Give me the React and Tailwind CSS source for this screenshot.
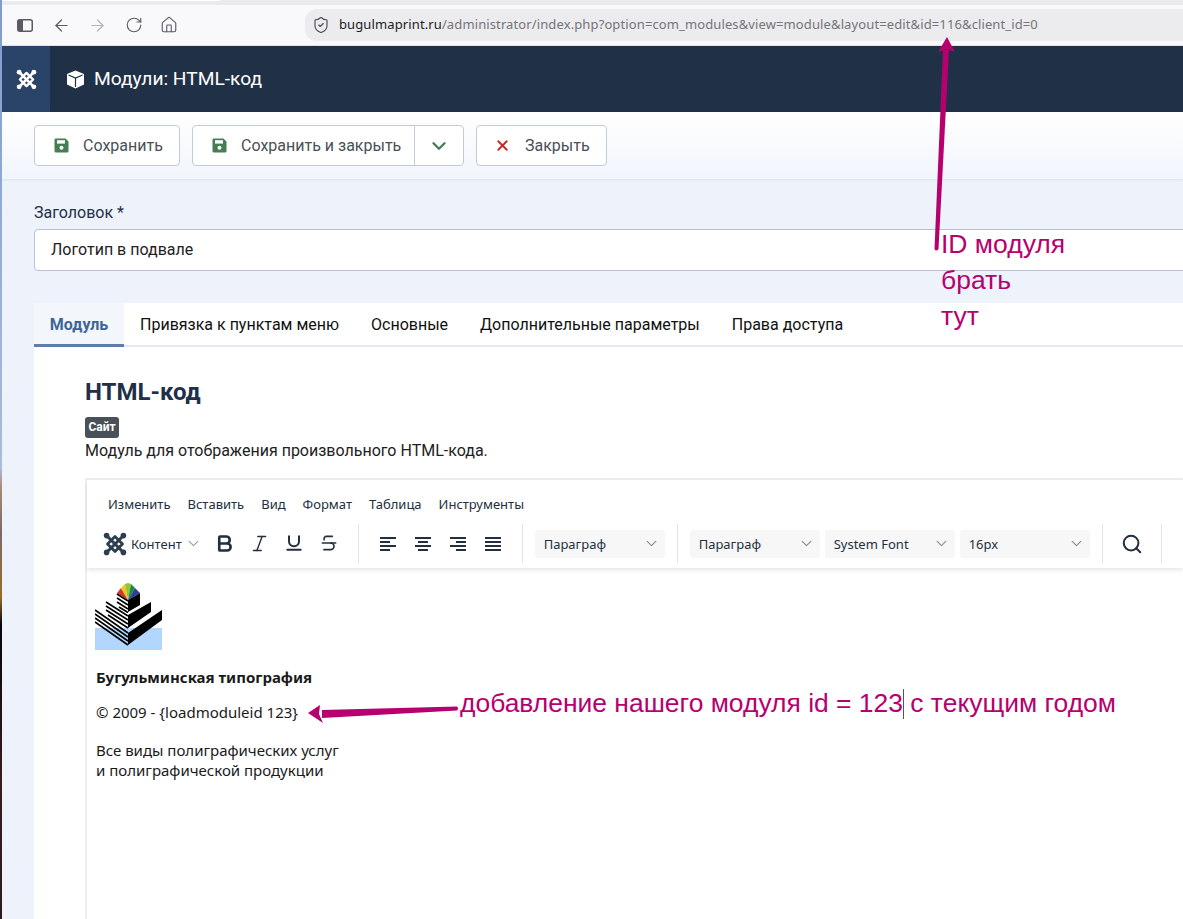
import React from "react";
import { ArrowLeft, ArrowRight, RotateCw, Home, ShieldCheck, ChevronDown, Search, X, Bold, Italic, Underline, Strikethrough } from "lucide-react";

function JoomlaLogo({ size = 24, color = "#fff" }) {
  return (
    <svg width={size} height={size} viewBox="0 0 24 24" fill="none" stroke={color} strokeLinecap="round" strokeLinejoin="round">
      <path d="M4.5 4.5 L19.5 19.5 M19.5 4.5 L4.5 19.5" strokeWidth="3" />
      <path d="M4.5 12 L12 4.5 L19.5 12 L12 19.5 Z" strokeWidth="2.8" />
      <circle cx="3.6" cy="3.6" r="2.8" fill={color} stroke="none" />
      <circle cx="20.4" cy="3.6" r="2.8" fill={color} stroke="none" />
      <circle cx="3.6" cy="20.4" r="2.8" fill={color} stroke="none" />
      <circle cx="20.4" cy="20.4" r="2.8" fill={color} stroke="none" />
    </svg>
  );
}

function SaveIcon() {
  return (
    <svg width="15" height="15" viewBox="0 0 15 15">
      <path d="M1.5 0.5 H11.5 L14.5 3.5 V13 a1.5 1.5 0 0 1 -1.5 1.5 H2 a1.5 1.5 0 0 1 -1.5 -1.5 V2 a1.5 1.5 0 0 1 1 -1.5 Z" fill="#457d54" />
      <rect x="3" y="2.2" width="8" height="3.4" fill="#fff" />
      <circle cx="7.5" cy="9.8" r="2" fill="#fff" />
    </svg>
  );
}

function AlignIcon({ kind }) {
  const rows = kind === "justify" ? [[0, 16], [0, 16], [0, 16], [0, 16]]
    : kind === "left" ? [[0, 16], [0, 10], [0, 16], [0, 10]]
    : kind === "center" ? [[0, 16], [3, 10], [0, 16], [3, 10]]
    : [[0, 16], [6, 10], [0, 16], [6, 10]];
  return (
    <svg width="16" height="14" viewBox="0 0 16 14" fill="#222f3e">
      {rows.map(([x, w], i) => <rect key={i} x={x} y={i * 4} width={w} height="2" />)}
    </svg>
  );
}

function SiteLogo() {
  return (
    <svg width="67" height="67" viewBox="0 0 67 67" className="block -ml-px">
      <rect x="0" y="45" width="67" height="22" fill="#b3d6ff" />
      <path d="M22 10 L26 5 L33 17 Z" fill="#d8352a" />
      <path d="M26 5 L30 1 L33 17 Z" fill="#f0c419" />
      <path d="M30 1 L33 0 L36 1 L33 17 Z" fill="#8cc63f" />
      <path d="M36 1 L40 5 L33 17 Z" fill="#1f8a3c" />
      <path d="M40 5 L45 10 L33 17 Z" fill="#2b3f9e" />
      <path d="M33 17 L45 10 V22 L33 29 Z" fill="#000" />
      <path d="M33 32 L56 19 V29 L33 45 Z" fill="#000" />
      <path d="M33 50 L67 27 V37 L33 62 Z" fill="#000" />
      <g stroke="#000" strokeWidth="1.6" fill="none">
        <path d="M22 11 L33 18 M22 15 L33 22 M22 19 L33 26 M24 24 L33 29.5" />
        <path d="M11 19 L33 33 M11 23 L33 37 M11 27 L33 41 M13 32 L33 45" />
        <path d="M0 27 L33 50 M0 31 L33 54 M0 35 L33 58 M0 39 L33 62" />
      </g>
    </svg>
  );
}

const Tool = ({ children }) => <span className="w-[35px] flex justify-center text-[#222f3e]">{children}</span>;
const Sep = ({ ml = "" }) => <span className={`h-[39px] w-px bg-[#dfe3e8] ${ml}`} />;
const Sel = ({ children }) => (
  <span className="w-[130px] h-7 rounded-[3px] bg-[#f7f7f8] flex items-center justify-between pl-[9px] pr-[5px] text-[13px] text-[#222f3e]">
    <span className="pt-[2px]">{children}</span>
    <ChevronDown size={17} className="text-[#8a939c]" strokeWidth={1.8} />
  </span>
);

export default function App() {
  return (
    <div className="relative w-[1183px] h-[919px] overflow-hidden bg-[#edf2fb] font-['Roboto',sans-serif]">
      <div className="absolute left-0 top-0 bottom-0 w-[2px] bg-[linear-gradient(to_bottom,#7f9ccf_0%,#a9bcdc_51%,#a98a78_53%,#7d6a66_58%,#9a6a2a_65%,#05060c_68%,#3a1c1c_85%,#2a1c22_100%)]" />

      <div className="ml-[2px] h-[5px] bg-[#ebeaee]"><div className="w-[218px] h-px bg-white" /></div>
      <div className="ml-[2px] h-[41px] bg-[#f9f9fb] flex items-center border-b border-[#e2e2e5]">
        <span className="ml-[15px] w-[18px] flex items-center">
          <svg width="16" height="13" viewBox="0 0 16 13" fill="none"><rect x="0.75" y="0.75" width="14.5" height="11.5" rx="2" stroke="#5b5b66" strokeWidth="1.5" /><rect x="1" y="1" width="5" height="11" fill="#5b5b66" /></svg>
        </span>
        <ArrowLeft size={19} strokeWidth={1.5} className="ml-[17px] text-[#5b5b66]" />
        <ArrowRight size={19} strokeWidth={1.5} className="ml-[17px] text-[#b3b3ba]" />
        <RotateCw size={18} strokeWidth={1.5} className="ml-[18px] text-[#5b5b66]" />
        <Home size={18} strokeWidth={1.5} className="ml-[17px] text-[#5b5b66]" />
        <div className="ml-[127px] flex-1 h-8 -mr-px rounded-l-xl bg-[#ecebee] flex items-center">
          <ShieldCheck size={18} strokeWidth={1.5} className="ml-[7px] text-[#4a4a52]" />
          <span className="ml-[9px] text-[13px] tracking-[0.115px] font-['Noto_Sans',sans-serif] text-[#1c1b22]">
            bugulmaprint.ru<span className="text-[#74747c]">/administrator/index.php?option=com_modules&amp;view=module&amp;layout=edit&amp;id=116&amp;client_id=0</span>
          </span>
        </div>
      </div>

      <header className="ml-[2px] h-[66px] bg-[#1f3047] flex items-center text-white">
        <div className="w-[48px] h-full bg-[#2a4369] flex items-center justify-center"><JoomlaLogo size={21} /></div>
        <svg className="ml-[16px]" width="19" height="19" viewBox="0 0 19 19"><path d="M9.5 0.5 L18 4 V14.5 L9.5 18.5 L1 14.5 V4 Z" fill="#fff" /><path d="M2.5 5 L9.5 8 L16.5 5 M9.5 8 V17" stroke="#1f3047" strokeWidth="1.2" fill="none" /></svg>
        <h1 className="ml-[9px] text-[19.2px] font-normal">Модули: HTML-код</h1>
      </header>

      <div className="ml-[2px] h-[67px] bg-gradient-to-b from-white to-[#f1f5fc] flex items-start pt-[13px] pl-[32px] shadow-[0_1px_2px_rgba(30,50,90,0.08)] text-[16px] text-[#495057]">
        <div className="h-[41px] w-[146px] rounded-[4px] border border-[#c4cbd8] bg-white flex items-center pl-[19px]">
          <SaveIcon /><span className="ml-[14px]">Сохранить</span>
        </div>
        <div className="ml-[12px] h-[41px] w-[272px] rounded-[4px] border border-[#c4cbd8] bg-white flex items-center">
          <span className="pl-[19px] flex items-center w-[222px] h-full border-r border-[#c4cbd8]">
            <SaveIcon /><span className="ml-[14px] whitespace-nowrap">Сохранить и закрыть</span>
          </span>
          <span className="flex-1 flex justify-center"><ChevronDown size={22} strokeWidth={2.6} className="text-[#457d54]" /></span>
        </div>
        <div className="ml-[12px] h-[41px] w-[131px] rounded-[4px] border border-[#c4cbd8] bg-white flex items-center pl-[17px]">
          <X size={17} strokeWidth={2.6} className="text-[#c52827]" /><span className="ml-[14px]">Закрыть</span>
        </div>
      </div>

      <main className="pl-[34px]">
        <label className="block mt-[24px] text-[16px] leading-[20px] text-[#1f3047]">Заголовок *</label>
        <div className="mt-[6px] h-[42px] w-[1160px] rounded-[4px] border border-[#b8c2d3] bg-white flex items-center pl-4 text-[16px] text-[#222]">Логотип в подвале</div>

        <div className="mt-[32px] h-[44px] bg-white border-b-2 border-[#e4e9f3] flex text-[16px] text-[#111]">
          <div className="w-[90px] h-[44px] bg-[#f3f6fa] border-b-[3px] border-[#5d7ea5] pt-[2px] flex items-center justify-center font-bold text-[#3f6596] shrink-0">Модуль</div>
          <span className="ml-[16px] self-center pt-[2px]">Привязка к пунктам меню</span>
          <span className="ml-[32px] self-center pt-[2px]">Основные</span>
          <span className="ml-[32px] self-center pt-[2px]">Дополнительные параметры</span>
          <span className="ml-[32px] self-center pt-[2px]">Права доступа</span>
        </div>

        <section className="bg-white h-[573px] pl-[51px]">
          <h2 className="pt-[30px] text-[24px] leading-[30px] font-bold text-[#1f3047]">HTML-код</h2>
          <span className="mt-[10px] block w-[34px] h-[21px] rounded-[3px] bg-[#495057] text-white text-[12px] font-bold leading-[20px] text-center">Сайт</span>
          <p className="pt-[1px] text-[16px] leading-[24px] text-[#222]">Модуль для отображения произвольного HTML-кода.</p>

          <div className="mt-[15px] h-[600px] border-2 border-[#eeeeee] border-r-0 font-['Noto_Sans',sans-serif]">
            <div className="h-[88px] bg-white shadow-[0_2px_4px_rgba(0,0,0,0.1)]">
              <div className="flex gap-[17px] pl-[21px] pt-[14px] text-[13px] leading-[20px] text-[#222f3e]">
                <span>Изменить</span><span>Вставить</span><span>Вид</span><span>Формат</span><span>Таблица</span><span>Инструменты</span>
              </div>
              <div className="mt-[10px] flex items-center h-[39px] pl-[16px]">
                <JoomlaLogo size={24} color="#2c3e50" />
                <span className="ml-[4px] pt-[2px] text-[13px] text-[#222f3e]">Контент</span>
                <ChevronDown size={17} strokeWidth={1.8} className="ml-[3px] text-[#9aa2aa]" />
                <span className="ml-[5px] flex">
                  <Tool><Bold size={21} strokeWidth={3} /></Tool>
                  <Tool><Italic size={21} strokeWidth={1.6} /></Tool>
                  <Tool><Underline size={20} strokeWidth={2.4} /></Tool>
                  <Tool><Strikethrough size={20} strokeWidth={2} /></Tool>
                </span>
                <Sep ml="ml-[11px]" />
                <span className="ml-[12px] flex">
                  <Tool><AlignIcon kind="left" /></Tool>
                  <Tool><AlignIcon kind="center" /></Tool>
                  <Tool><AlignIcon kind="right" /></Tool>
                  <Tool><AlignIcon kind="justify" /></Tool>
                </span>
                <Sep ml="ml-[11px]" />
                <span className="ml-[12px]"><Sel>Параграф</Sel></span>
                <Sep ml="ml-[12px]" />
                <span className="ml-[12px] flex gap-[5px]">
                  <Sel>Параграф</Sel>
                  <Sel>System Font</Sel>
                  <Sel>16px</Sel>
                </span>
                <Sep ml="ml-[12px]" />
                <span className="ml-[12px] w-[35px] flex justify-center text-[#222f3e]"><Search size={22} strokeWidth={2.2} /></span>
                <Sep ml="ml-[11px]" />
              </div>
            </div>
            <div className="pl-[9px] pt-[15px] text-[15px] leading-[20px] text-[#1a1a1a]">
              <SiteLogo />
              <p className="mt-[17px] font-bold">Бугульминская типография</p>
              <p className="mt-[15px]">© 2009 - {"{loadmoduleid 123}"}</p>
              <p className="mt-[18px]">Все виды полиграфических услуг<br />и полиграфической продукции</p>
            </div>
          </div>
        </section>
      </main>

      {/* annotations */}
      <svg className="absolute left-0 top-0 pointer-events-none" width="1183" height="919">
        <path d="M934.5 249 Q936 252 938.5 249 L949 50 L943 50 Z" fill="#b7006f" />
        <path d="M947 37 L955 52 L947 49 L938 52 Z" fill="#b7006f" />
        <path d="M457 706.5 Q459 708.5 457 710.5 L322 718 L322 710 Z" fill="#b7006f" />
        <path d="M308 713 L320 705 L319 714 L323 723 Z" fill="#b7006f" />
      </svg>
      <div className="absolute left-[941px] top-[226px] text-[26.5px] leading-[36px] text-[#b7006f] font-['Liberation_Sans',sans-serif]">ID модуля<br />брать<br />тут</div>
      <div className="absolute left-[460px] top-[687px] whitespace-nowrap text-[26.45px] leading-[32px] text-[#b7006f] font-['Liberation_Sans',sans-serif]">
        добавление нашего модуля id = 123<span className="inline-block w-px -mr-px h-[30px] bg-[#555] align-[-7px]" /> с текущим годом
      </div>
    </div>
  );
}
